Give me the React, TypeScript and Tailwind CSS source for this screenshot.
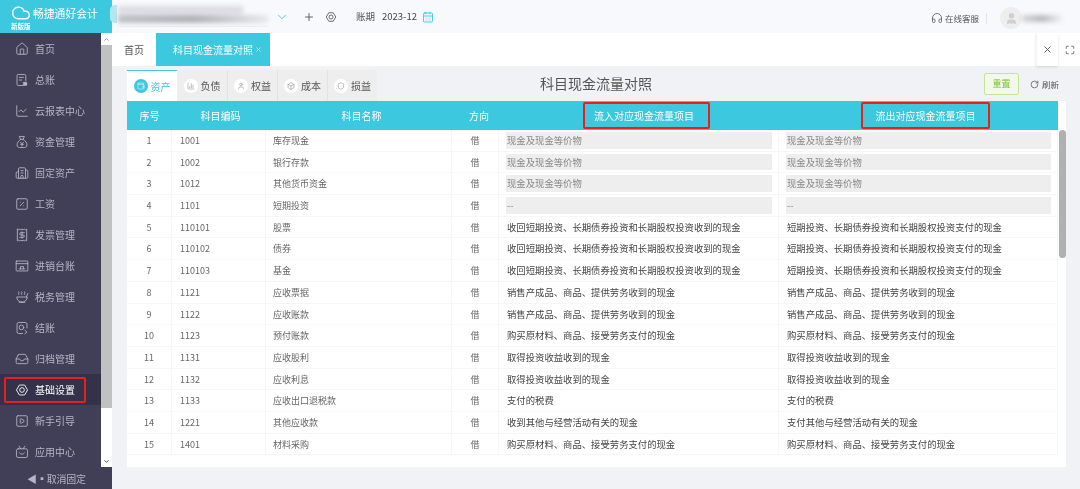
import { Home, LineChart, Building2, SquarePercent, Receipt, Soup, Inbox, SquarePlay, Plus, ChevronDown, CalendarDays, Headphones, User, X, Maximize, RotateCw, ChevronUp, Wallet, Shield, Box, BarChart3, Cloud } from 'lucide-react'

type IconProps = { size?: number; strokeWidth?: number; className?: string }

function Gear({ size = 14, strokeWidth = 1.5, className }: IconProps) {
  return (
    <svg width={size} height={size} viewBox="0 0 24 24" fill="none" stroke="currentColor" strokeWidth={strokeWidth} strokeLinejoin="round" className={className}>
      <path d="M7.5 3.5h9l5 8.5-5 8.5h-9L2.5 12z" />
      <circle cx="12" cy="12" r="4" />
    </svg>
  )
}

function Bag({ size = 14, strokeWidth = 1.5, className }: IconProps) {
  return (
    <svg width={size} height={size} viewBox="0 0 24 24" fill="none" stroke="currentColor" strokeWidth={strokeWidth} strokeLinejoin="round" strokeLinecap="round" className={className}>
      <path d="M8 2.5h8l-2 5h-4z" />
      <path d="M10 7.5C6 10 3.5 13.5 3.5 17c0 3 2 4.5 4.5 4.5h8c2.5 0 4.5-1.5 4.5-4.5 0-3.5-2.500-7-6.500-9.500" />
      <path d="M9.500 12.500 12 15l2.500-2.500M12 15v4M9.500 16h5" />
    </svg>
  )
}

function Ledger({ size = 14, strokeWidth = 1.5, className }: IconProps) {
  return (
    <svg width={size} height={size} viewBox="0 0 24 24" fill="none" stroke="currentColor" strokeWidth={strokeWidth} strokeLinejoin="round" strokeLinecap="round" className={className}>
      <path d="M14 21.500H5.500a2 2 0 0 1-2-2v-15a2 2 0 0 1 2-2h11a2 2 0 0 1 2 2V13" />
      <path d="M7.500 7.500h7M7.500 12h4" />
      <rect x="15" y="16" width="5" height="5" fill="currentColor" />
    </svg>
  )
}

function Board({ size = 14, strokeWidth = 1.5, className }: IconProps) {
  return (
    <svg width={size} height={size} viewBox="0 0 24 24" fill="none" stroke="currentColor" strokeWidth={strokeWidth} strokeLinejoin="round" strokeLinecap="round" className={className}>
      <rect x="2" y="3.500" width="20" height="17" rx="1" />
      <path d="M2 8h20M7 17h10M9.500 17v-4h5v4" />
    </svg>
  )
}

function CheckOut({ size = 14, strokeWidth = 1.5, className }: IconProps) {
  return (
    <svg width={size} height={size} viewBox="0 0 24 24" fill="none" stroke="currentColor" strokeWidth={strokeWidth} strokeLinejoin="round" strokeLinecap="round" className={className}>
      <path d="M20.500 12V5.500a3 3 0 0 0-3-3h-11a3 3 0 0 0-3 3v13a3 3 0 0 0 3 3H13" />
      <circle cx="11" cy="11" r="4" />
      <path d="m17 16 3.500 3-3.500 3" />
    </svg>
  )
}

function AppBot({ size = 14, strokeWidth = 1.5, className }: IconProps) {
  return (
    <svg width={size} height={size} viewBox="0 0 24 24" fill="none" stroke="currentColor" strokeWidth={strokeWidth} strokeLinejoin="round" strokeLinecap="round" className={className}>
      <rect x="2.500" y="6.500" width="19" height="15" rx="3" />
      <path d="M7 2l3 4.500M17 2l-3 4.500M8 13.500c1 3 7 3 8 0" />
    </svg>
  )
}

const menus = [
  { label: '首页', icon: Home },
  { label: '总账', icon: Ledger },
  { label: '云报表中心', icon: LineChart },
  { label: '资金管理', icon: Bag },
  { label: '固定资产', icon: Building2 },
  { label: '工资', icon: SquarePercent },
  { label: '发票管理', icon: Receipt },
  { label: '进销台账', icon: Board },
  { label: '税务管理', icon: Soup },
  { label: '结账', icon: CheckOut },
  { label: '归档管理', icon: Inbox },
  { label: '基础设置', icon: Gear, active: true },
  { label: '新手引导', icon: SquarePlay },
  { label: '应用中心', icon: AppBot },
]

const tabs = [
  { label: '资产', icon: Wallet, active: true },
  { label: '负债', icon: BarChart3 },
  { label: '权益', icon: User },
  { label: '成本', icon: Box },
  { label: '损益', icon: Shield },
]

const cash = '现金及现金等价物'
const invIn = '收回短期投资、长期债券投资和长期股权投资收到的现金'
const invOut = '短期投资、长期债券投资和长期股权投资支付的现金'
const sale = '销售产成品、商品、提供劳务收到的现金'
const buy = '购买原材料、商品、接受劳务支付的现金'
const income = '取得投资收益收到的现金'

const rows = [
  { code: '1001', name: '库存现金', inflow: cash, outflow: cash, locked: true },
  { code: '1002', name: '银行存款', inflow: cash, outflow: cash, locked: true },
  { code: '1012', name: '其他货币资金', inflow: cash, outflow: cash, locked: true },
  { code: '1101', name: '短期投资', inflow: '--', outflow: '--', locked: true },
  { code: '110101', name: '股票', inflow: invIn, outflow: invOut },
  { code: '110102', name: '债券', inflow: invIn, outflow: invOut },
  { code: '110103', name: '基金', inflow: invIn, outflow: invOut },
  { code: '1121', name: '应收票据', inflow: sale, outflow: sale },
  { code: '1122', name: '应收账款', inflow: sale, outflow: sale },
  { code: '1123', name: '预付账款', inflow: buy, outflow: buy },
  { code: '1131', name: '应收股利', inflow: income, outflow: income },
  { code: '1132', name: '应收利息', inflow: income, outflow: income },
  { code: '1133', name: '应收出口退税款', inflow: '支付的税费', outflow: '支付的税费' },
  { code: '1221', name: '其他应收款', inflow: '收到其他与经营活动有关的现金', outflow: '支付其他与经营活动有关的现金' },
  { code: '1401', name: '材料采购', inflow: buy, outflow: buy },
]

export default function App() {
  return (
    <div className="flex h-[489px] w-[1080px] flex-col overflow-hidden bg-[#f1f2f5] font-['Noto_Sans_CJK_SC','Noto_Sans',sans-serif] text-[#555] blur-[0.3px]">
      {/* Top bar */}
      <div className="relative flex h-[33px] shrink-0 items-center bg-[#f8f9fc]">
        <div className="flex h-full w-[112px] shrink-0 flex-col bg-[#3cc8de] pl-[11px] text-white">
          <div className="flex items-center gap-[2px] pt-[3px]">
            <Cloud size={20} strokeWidth={1.8} />
            <span className="text-[10.8px] leading-[20px] whitespace-nowrap">畅捷通好会计</span>
          </div>
          <span className="text-[6.5px] leading-[7px] font-bold">新版版</span>
        </div>
        <div className="absolute top-[5px] left-[110px] h-[18px] w-[7px] rounded-l-[5px] bg-[#b4e6f0]" />
        <div className="ml-[6px] flex w-[155px] flex-col">
          <div className="flex flex-col gap-[1px] blur-[2px]">
            <div className="h-[8px] w-[125px] bg-[#dcdce2]" />
            <div className="h-[8px] w-[150px] bg-gradient-to-r from-[#c0c0c8] via-[#b0b0b6] to-[#e8e8ee]" />
          </div>
          <div className="mt-[3px] h-px w-[150px] bg-[#eeeef2]" />
        </div>
        <ChevronDown size={14} strokeWidth={1.5} className="ml-[2px] text-[#3cc8de]" />
        <Plus size={12} strokeWidth={1.8} className="ml-[14px] text-[#555]" />
        <Gear size={12} strokeWidth={1.7} className="ml-[10px] text-[#555]" />
        <span className="ml-[19px] text-[9.500px]">账期</span>
        <span className="ml-[7px] text-[9.500px] text-[#444]">2023-12</span>
        <CalendarDays size={12} strokeWidth={1.8} className="ml-[5px] text-[#3cc8de]" />
        <div className="ml-auto flex items-center pt-[3px] pr-[18px]">
          <Headphones size={12} strokeWidth={1.6} className="text-[#555]" />
          <span className="ml-[2px] text-[8.500px]">在线客服</span>
          <div className="ml-[7px] h-[11px] w-px bg-[#e4e4e8]" />
          <div className="ml-[13px] flex h-[22px] w-[22px] items-center justify-center rounded-full bg-[#eeeeee]">
            <User size={13} fill="#cfcfcf" className="text-[#cfcfcf]" />
          </div>
          <div className="h-[7px] w-[40px] bg-gradient-to-r from-[#d8d8dc] via-[#b8b8bc] to-[#eef1f8] blur-[2px]" />
        </div>
      </div>

      <div className="flex min-h-0 flex-1">
        {/* Sidebar */}
        <div className="flex w-[112px] shrink-0 flex-col bg-[#403f57]">
          <div className="flex h-[434px] shrink-0">
            <div className="w-[101px]">
              {menus.map((m) => (
                <div key={m.label} className={`flex h-[31px] items-center px-[4px] ${m.active ? 'bg-[#33324a]' : ''}`}>
                  <div className={`flex h-[26px] w-[82px] items-center rounded-[2px] ${m.active ? 'border-2 border-[#e8201c] pl-[9px] text-white' : 'pl-[11px] text-[#b4b6c6]'}`}>
                    <m.icon size={14} strokeWidth={1.5} />
                    <span className="ml-[6px] text-[10px] whitespace-nowrap">{m.label}</span>
                  </div>
                </div>
              ))}
            </div>
            <div className="flex w-[11px] flex-col items-center bg-white">
              <ChevronUp size={7} strokeWidth={3} className="mt-[3px] text-[#888]" />
              <div className="mt-[2px] h-[363px] w-full bg-[#c1c1c1]" />
              <ChevronDown size={7} strokeWidth={3} className="mt-auto mb-[2px] text-[#333]" />
            </div>
          </div>
          <div className="flex flex-1 items-center justify-center pl-[1px] text-[10px] tracking-[-0.2px] text-[#b4b6c6]">◀▪取消固定</div>
        </div>

        {/* Main */}
        <div className="flex min-w-0 flex-1 flex-col">
          <div className="flex h-[33px] shrink-0 bg-white">
            <div className="flex w-[44px] items-center justify-center text-[10px] text-[#555]">首页</div>
            <div className="flex w-[114px] items-center justify-end gap-[2px] bg-[#3cc8de] pr-[8px] text-[10px] text-white">
              科目现金流量对照
              <X size={7} strokeWidth={2} />
            </div>
            <div className="ml-auto flex">
              <div className="flex w-[22px] items-center justify-center border-l border-[#f1f2f5] shadow-sm">
                <X size={11} className="text-[#555]" />
              </div>
              <div className="ml-[1px] flex w-[21px] items-center justify-center">
                <Maximize size={10} className="text-[#555]" />
              </div>
            </div>
          </div>

          <div className="flex min-h-0 flex-1 flex-col pt-[4px] pr-[14px] pl-[15px]">
            {/* Title row */}
            <div className="flex h-[31px] shrink-0 items-stretch">
              <div className="flex w-[250px] shrink-0 bg-[#eeeeee]">
                {tabs.map((t, i) => (
                  <div
                    key={t.label}
                    className={`flex h-[31px] w-[50px] items-center justify-center gap-[3px] text-[10px] ${t.active ? 'border-t border-[#3cc8de] bg-white text-[#3cc8de]' : 'text-[#555]'} ${i > 1 ? 'border-l border-[#e2e2e2]' : ''}`}
                  >
                    <span className={`flex h-[14px] w-[14px] items-center justify-center rounded-full ${t.active ? 'bg-[#3cc8de] text-white' : 'bg-white text-[#888]'}`}>
                      <t.icon size={8} strokeWidth={1.6} />
                    </span>
                    {t.label}
                  </div>
                ))}
              </div>
              <div className="flex-1 pt-[3px] pl-[163px] text-[14px] leading-[20px] text-[#555]">科目现金流量对照</div>
              <div className="flex items-start pt-[3px]">
                <div className="flex h-[22px] w-[35px] items-center justify-center rounded-[2px] border border-[#c4e39a] bg-[#f3f9e9] text-[9px] text-[#7cc22e]">重置</div>
                <div className="ml-[11px] flex h-[22px] items-center gap-[3px] pr-[7px] text-[8.500px] text-[#555]">
                  <RotateCw size={9} />
                  刷新
                </div>
              </div>
            </div>

            {/* Table */}
            <div className="flex h-[366px] w-[939px] shrink-0 flex-col bg-white">
              <div className="flex h-[29px] w-[931px] shrink-0 items-center bg-[#3cc8de] text-center text-[10px] text-white">
                <div className="w-[45px]">序号</div>
                <div className="w-[94px] pl-[3px]">科目编码</div>
                <div className="w-[186px] pl-[5px]">科目名称</div>
                <div className="w-[47px] pl-[7px]">方向</div>
                <div className="flex w-[280px] justify-start pl-[84px]">
                  <div className="flex h-[27px] w-[127px] items-center justify-center rounded-[2px] border-2 border-[#e8201c] pr-[5px]">流入对应现金流量项目</div>
                </div>
                <div className="flex w-[279px] justify-start pl-[82px]">
                  <div className="flex h-[27px] w-[129px] items-center justify-center rounded-[2px] border-2 border-[#e8201c]">流出对应现金流量项目</div>
                </div>
              </div>
              <div className="flex min-h-0">
                <div className="w-[931px]">
                  {rows.map((r, i) => (
                    <div key={r.code} className="flex h-[21.7px] border-b border-[#f6f6f8] text-[9px] leading-[21px] text-[#666]">
                      <div className="w-[45px] border-r border-[#f6f6f8] text-center">{i + 1}</div>
                      <div className="w-[94px] border-r border-[#f6f6f8] pl-[8px]">{r.code}</div>
                      <div className="w-[186px] border-r border-[#f6f6f8] pl-[7px]">{r.name}</div>
                      <div className="w-[47px] border-r border-[#f6f6f8] text-center">借</div>
                      {[r.inflow, r.outflow].map((v, k) => (
                        <div key={k} className={`flex items-center border-r border-[#f6f6f8] py-[2px] pr-[6px] pl-[7px] ${k === 0 ? 'w-[280px]' : 'w-[279px]'}`}>
                          <div className={`h-full w-full pl-px text-[9.350px] leading-[17px] ${r.locked ? 'bg-[#eeeeee] text-[#888]' : 'text-[#444]'}`}>{v}</div>
                        </div>
                      ))}
                    </div>
                  ))}
                </div>
                <div className="w-[8px] pl-px">
                  <div className="h-[128px] w-[7px] rounded-[4px] bg-[#b0b0b0]" />
                </div>
              </div>
            </div>
          </div>
        </div>
      </div>
    </div>
  )
}
